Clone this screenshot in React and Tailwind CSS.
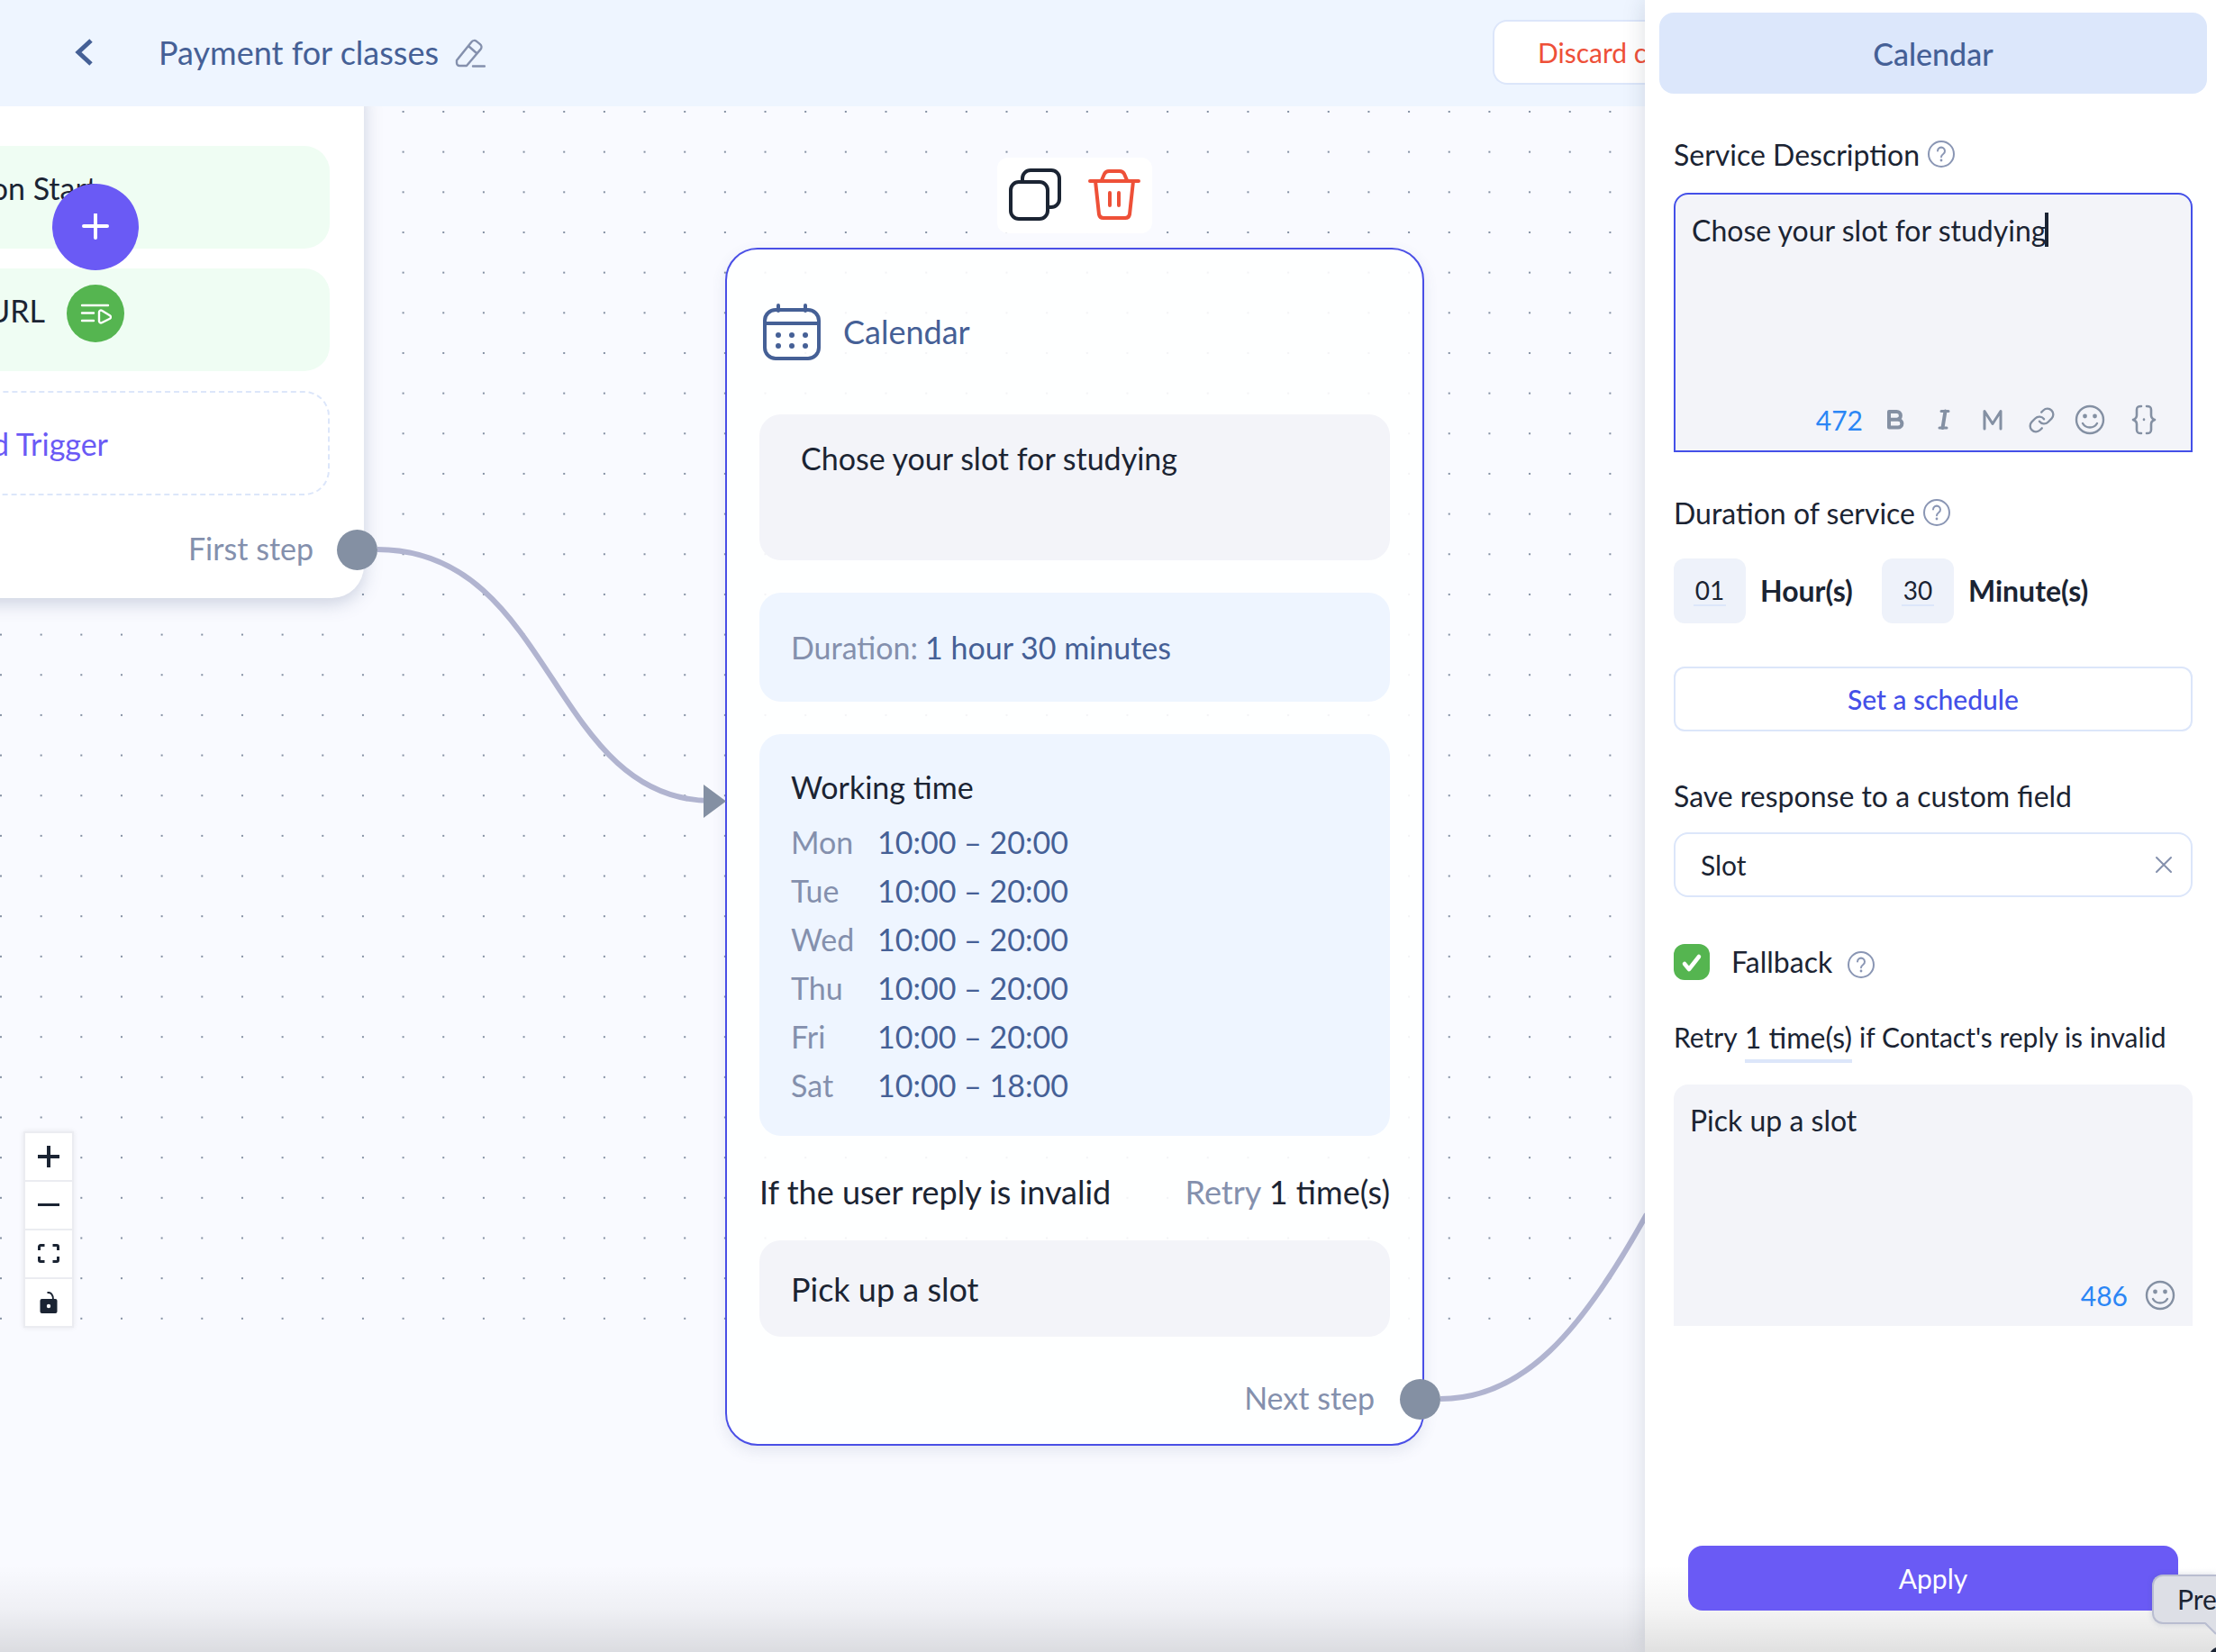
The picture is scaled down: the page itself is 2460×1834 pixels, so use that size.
import React, { useState } from 'react';
import { Link } from 'lucide-react';

const week = [
    { day: 'Mon', hours: '10:00 – 20:00' },
    { day: 'Tue', hours: '10:00 – 20:00' },
    { day: 'Wed', hours: '10:00 – 20:00' },
    { day: 'Thu', hours: '10:00 – 20:00' },
    { day: 'Fri', hours: '10:00 – 20:00' },
    { day: 'Sat', hours: '10:00 – 18:00' }
];

const HelpIcon = () => (
    <svg className="size-8 shrink-0" viewBox="0 0 32 32" fill="none" stroke="#8a96b4" strokeWidth="2" strokeLinecap="round">
        <circle cx="16" cy="15" r="14" />
        <path d="M12 11.600a4 4 0 1 1 6.200 3.400c-1.500 1-2.200 1.600-2.200 3.200" />
        <circle cx="16" cy="22" r="1.400" fill="#8a96b4" stroke="none" />
    </svg>
);

const SmileIcon = () => (
    <svg className="size-9" viewBox="0 0 36 36" fill="none" stroke="#8490a3" strokeWidth="2.400" strokeLinecap="round">
        <circle cx="18" cy="18" r="15" />
        <circle cx="12.500" cy="14" r="2.400" fill="#8490a3" stroke="none" />
        <circle cx="23.500" cy="14" r="2.400" fill="#8490a3" stroke="none" />
        <path d="M10 22c3.500 6 12.500 6 16 0" />
    </svg>
);

const CalendarIcon = () => (
    <svg className="h-16 w-[66px]" viewBox="0 0 66 64" fill="none" stroke="#456096" strokeWidth="4" strokeLinecap="round">
        <rect x="3" y="8" width="60" height="54" rx="12" />
        <path d="M4 23h58M18 3v6M48 3v6" />
        <g fill="#456096" stroke="none">
            <circle cx="18" cy="36" r="3" /><circle cx="33" cy="36" r="3" /><circle cx="48" cy="36" r="3" />
            <circle cx="18" cy="48" r="3" /><circle cx="33" cy="48" r="3" /><circle cx="48" cy="48" r="3" />
        </g>
    </svg>
);

const Header = () => (
    <header className="flex h-[118px] items-center overflow-hidden bg-[#eef5ff] pb-0.5 pl-20">
        <button aria-label="Back">
            <svg className="h-8 w-6" viewBox="0 0 24 32" fill="none" stroke="#456096" strokeWidth="5">
                <path d="M21 3 7 16l14 13" />
            </svg>
        </button>
        <h1 className="ml-[72px] text-[36px] text-[#456096]">Payment for classes</h1>
        <button aria-label="Rename" className="ml-4">
            <svg className="size-9" viewBox="0 0 36 36" fill="none" stroke="#8490ad" strokeWidth="2.400" strokeLinecap="round" strokeLinejoin="round">
                <path d="M4 27 20.500 6.500a4 4 0 0 1 5.500-.6l4 3.200a4 4 0 0 1 .6 5.500L15 33H7a3 3 0 0 1-3-3zM17 11l9 8M22 33.500h13" />
            </svg>
        </button>
        <button className="ml-auto h-[72px] w-[169px] overflow-hidden rounded-l-2xl border-2 border-r-0 border-[#dce6fa] bg-white pl-12 text-left text-[30px] whitespace-nowrap text-[#ee5038]">
            Discard changes
        </button>
    </header>
);

const StartNode = () => (
    <section className="absolute -top-10 right-full -mr-[404px] w-[776px] rounded-[36px] bg-white px-[38px] pt-[84px] pb-7 text-[34px] shadow-[0_6px_20px_rgba(70,90,130,0.25)]">
        <div className="flex flex-col gap-[22px]">
            <div className="flex h-[114px] items-center justify-end rounded-[28px] bg-[#effdf3] pr-[258px] pb-[22px]">Conversation Start</div>
            <div className="flex h-[114px] items-center justify-end rounded-[28px] bg-[#effdf3] pr-[316px] pb-[22px]">URL</div>
            <button className="flex h-[116px] items-center justify-end rounded-[28px] border-2 border-dashed border-[#dce6fa] pr-[244px] text-[#6a5af5]">Add Trigger</button>
        </div>
        <p className="mt-8 pr-[18px] text-right leading-[54px] text-[#8490ad]">First step</p>
        <span className="absolute -right-[15px] bottom-[31px] size-[45px] rounded-full bg-[#8490a3]"></span>
    </section>
);

const CalendarNode = () => (
    <section className="absolute top-[157px] left-[805px] w-[776px] rounded-[36px] border-2 border-[#4a4fe6] bg-white/90 px-9 pt-[59px] pb-5 text-[34px] shadow-[0_6px_16px_rgba(70,90,130,0.12)]">
        <div className="absolute bottom-full left-[300px] mb-[18px] flex h-[84px] w-[172px] items-center justify-between rounded-xl bg-white px-3">
            <button aria-label="Duplicate">
                <svg className="size-[60px]" viewBox="0 0 60 60" fill="none" stroke="#1b2433" strokeWidth="4">
                    <rect x="3" y="15" width="41" height="41" rx="9" />
                    <path d="M16 15v-4a9 9 0 0 1 9-9h23a9 9 0 0 1 9 9v23a9 9 0 0 1-9 9h-4" />
                </svg>
            </button>
            <button aria-label="Delete">
                <svg className="size-[60px]" viewBox="0 0 60 60" fill="none" stroke="#ee5038" strokeWidth="4" strokeLinecap="round" strokeLinejoin="round">
                    <path d="M3 14h54M9 14l4 37a5 5 0 0 0 5 4h24a5 5 0 0 0 5-4l4-37M16 13l3-7a6 6 0 0 1 5-3h12a6 6 0 0 1 5 3l3 7M25 27v14M35 27v14" />
                </svg>
            </button>
        </div>

        <div className="flex items-center gap-6 pl-[3px] text-[#456096]">
            <CalendarIcon />
            <h2 className="text-[36px]">Calendar</h2>
        </div>
        <p className="mt-[60px] h-[162px] rounded-3xl bg-[#f3f4f9] px-[46px] pt-[23px]">Chose your slot for studying</p>
        <p className="mt-9 flex h-[121px] items-center gap-2 rounded-3xl bg-[#eef5ff] px-[35px] text-[#456096]">
            <span className="text-[#8490ad]">Duration:</span>1 hour 30 minutes
        </p>
        <div className="mt-9 h-[446px] rounded-3xl bg-[#eef5ff] px-[35px] pt-8">
            <h3 className="leading-[54px]">Working time</h3>
            <table className="mt-[7px] text-left leading-[54px] text-[#456096]">
                <tbody>
                    {week.map(row => (
                        <tr key={row.day}>
                            <th className="w-24 font-normal text-[#8490ad]">{row.day}</th>
                            <td>{row.hours}</td>
                        </tr>
                    ))}
                </tbody>
            </table>
        </div>
        <div className="mt-[35px] flex h-[54px] items-center justify-between text-[36px]">
            <p>If the user reply is invalid</p>
            <p><span className="text-[#8490ad]">Retry</span> 1 time(s)</p>
        </div>
        <p className="mt-[27px] flex h-[107px] items-center rounded-3xl bg-[#f3f4f9] px-[35px] text-[36px]">Pick up a slot</p>
        <p className="mt-[41px] mb-1 pr-[17px] text-right leading-[54px] text-[#8490ad]">Next step</p>
        <span className="absolute -right-5 bottom-[27px] size-[45px] rounded-full bg-[#8490a3]"></span>
    </section>
);

const Controls = () => (
    <div className="absolute top-[1138px] left-[26px] flex flex-col gap-0.5 border-2 border-[#ebecf1] bg-[#ebecf1] shadow-[0_0_6px_rgba(0,0,0,0.08)]">
        <button aria-label="Zoom in" className="grid size-[52px] place-items-center bg-white">
            <svg className="size-6" viewBox="0 0 24 24" stroke="#1b2433" strokeWidth="4"><path d="M0 12h24M12 0v24" /></svg>
        </button>
        <button aria-label="Zoom out" className="grid size-[52px] place-items-center bg-white">
            <svg className="size-6" viewBox="0 0 24 24" stroke="#1b2433" strokeWidth="3"><path d="M0 11.500h24" /></svg>
        </button>
        <button aria-label="Fit view" className="grid size-[52px] place-items-center bg-white">
            <svg className="size-6" viewBox="0 0 24 24" fill="none" stroke="#1b2433" strokeWidth="3">
                <path d="M1.500 8V4A1.500 1.500 0 0 1 3 2.500h4.500M16.500 2.500H21A1.500 1.500 0 0 1 22.500 4v4M22.500 15v4a1.500 1.500 0 0 1-1.500 1.500h-4.500M7.500 20.500H3A1.500 1.500 0 0 1 1.500 19v-4" />
            </svg>
        </button>
        <button aria-label="Lock" className="grid size-[52px] place-items-center bg-white">
            <svg className="size-6" viewBox="0 0 24 24">
                <path d="M10.500 1C14.500.6 17 3 17 9" fill="none" stroke="#1b2433" strokeWidth="2" />
                <rect x="2.500" y="8" width="19" height="16" rx="2" fill="#1b2433" />
                <circle cx="12" cy="16" r="2.200" fill="#fff" />
            </svg>
        </button>
    </div>
);

const Canvas = () => (
    <main className="relative flex-1 overflow-hidden bg-[#f9faff]">
        <svg className="absolute inset-0 h-[1350px] w-full">
            <defs>
                <pattern id="dots" width="44.660" height="44.660" patternUnits="userSpaceOnUse" y="5">
                    <rect x="0" y="0" width="2" height="2" fill="#8490a3" />
                </pattern>
            </defs>
            <rect width="100%" height="100%" fill="url(#dots)" />
        </svg>
        <StartNode />
        <CalendarNode />
        <svg className="pointer-events-none absolute inset-0 size-full" fill="none" stroke="#b1b4d0" strokeWidth="6">
            <path d="M419 492C615 492 610 771 790 771" />
            <path d="M1599 1435C1690 1435 1755 1362 1828 1230" />
            <path d="M781 753v37l25-18.500z" fill="#8490a3" stroke="none" />
        </svg>
        <button aria-label="Add block" className="absolute top-[86px] left-[58px] grid size-24 place-items-center rounded-full bg-[#6a5af5]">
            <svg className="size-[30px]" viewBox="0 0 30 30" stroke="#fff" strokeWidth="4" strokeLinecap="round"><path d="M2 14h26M15 1v26" /></svg>
        </button>
        <button aria-label="Run flow" className="absolute top-[198px] left-[74px] grid size-16 place-items-center rounded-full bg-[#55b550]">
            <svg className="h-6 w-9" viewBox="0 0 36 24" fill="none" stroke="#fff" strokeWidth="2.400" strokeLinecap="round" strokeLinejoin="round">
                <path d="M3 3h29M3 11.500h13M3 20h13M22 10.500v10a2 2 0 0 0 3 1.700l9-4.500a2 2 0 0 0 0-3.400l-9-5.500a2 2 0 0 0-3 1.700z" />
            </svg>
        </button>
        <Controls />
    </main>
);

const SettingsPanel = () => {
    const [description, setDescription] = useState('Chose your slot for studying');
    const [fallback, setFallback] = useState(true);
    const [retryText, setRetryText] = useState('Pick up a slot');

    return (
        <aside className="relative w-[634px] shrink-0 bg-white pt-[14px] text-[32px] shadow-[0_0_24px_rgba(30,40,70,0.15)]">
            <h2 className="mr-[10px] ml-4 flex h-[90px] items-center justify-center rounded-2xl bg-[#dce7fb] text-[34px] font-medium text-[#456096]">Calendar</h2>
            <form className="flex flex-col pr-[26px] pl-8" onSubmit={e => e.preventDefault()}>
                <div className="mt-11 flex h-12 items-center gap-2">
                    <label htmlFor="description">Service Description</label><HelpIcon />
                </div>
                <div className="relative mt-[18px] flex h-72 flex-col rounded-t-2xl border-2 border-[#4450e8] bg-[#f3f4f9]">
                    <textarea id="description" className="flex-1 resize-none px-[18px] pt-4 leading-[48px] outline-none" value={description} onChange={e => setDescription(e.target.value)} />
                    <span className="absolute top-5 left-[410px] h-[38px] w-1 bg-[#1b2433]"></span>
                    <div className="flex h-[68px] items-center justify-end gap-[18px] pr-[34px] text-[#8490a3]">
                        <span className="text-[30px] text-[#2b86f5]">472</span>
                        <button type="button" aria-label="Bold">
                            <svg className="size-9" viewBox="0 0 36 36" fill="none" stroke="currentColor" strokeWidth="4" strokeLinejoin="round">
                                <path d="M11 9h8.500a4.300 4.300 0 0 1 0 8.800H11zM11 17.800h10a4.300 4.300 0 0 1 0 8.800H11z" />
                            </svg>
                        </button>
                        <button type="button" aria-label="Italic">
                            <svg className="size-9" viewBox="0 0 36 36" fill="none" stroke="currentColor" strokeWidth="3" strokeLinecap="round">
                                <path d="M15 8.500h8M13 27h8" />
                                <path d="m19.500 8.500-3 18.500" strokeWidth="4" />
                            </svg>
                        </button>
                        <button type="button" aria-label="Monospace">
                            <svg className="size-9" viewBox="0 0 36 36" fill="none" stroke="currentColor" strokeWidth="3" strokeLinecap="round" strokeLinejoin="round">
                                <path d="M9 28V8.500l9 14 9-14V28" />
                            </svg>
                        </button>
                        <button type="button" aria-label="Link" className="grid size-9 place-items-center"><Link size={31} strokeWidth={1.800} /></button>
                        <button type="button" aria-label="Emoji"><SmileIcon /></button>
                        <button type="button" aria-label="Variables" className="ml-1.5">
                            <svg className="size-9" viewBox="0 0 36 36" fill="none" stroke="currentColor" strokeWidth="2.600" strokeLinecap="round" strokeLinejoin="round">
                                <path d="M15 3c-4 0-5 1-5 4v6c0 3-1 4-4 5 3 1 4 2 4 5v6c0 3 1 4 5 4M21 3c4 0 5 1 5 4v6c0 3 1 4 4 5-3 1-4 2-4 5v6c0 3-1 4-5 4M18 17.500v.5" />
                            </svg>
                        </button>
                    </div>
                </div>

                <div className="mt-11 flex h-12 items-center gap-2">
                    <span>Duration of service</span><HelpIcon />
                </div>
                <div className="mt-[26px] flex h-[72px] items-center">
                    <span className="grid h-full w-20 place-items-center rounded-xl bg-[#eef2fa]">
                        <input id="hours" className="w-9 border-b-2 border-[#dce6fa] text-center text-[28px] leading-8 outline-none" defaultValue="01" />
                    </span>
                    <label htmlFor="hours" className="ml-4 font-bold">Hour(s)</label>
                    <span className="ml-8 grid h-full w-20 place-items-center rounded-xl bg-[#eef2fa]">
                        <input id="minutes" className="w-9 border-b-2 border-[#dce6fa] text-center text-[28px] leading-8 outline-none" defaultValue="30" />
                    </span>
                    <label htmlFor="minutes" className="ml-4 font-bold">Minute(s)</label>
                </div>
                <button type="button" className="mt-12 h-[72px] rounded-xl border-2 border-[#dce6fa] text-[30px] font-medium text-[#4450e8]">Set a schedule</button>

                <label htmlFor="field" className="mt-12 leading-[48px]">Save response to a custom field</label>
                <div className="mt-4 flex h-[72px] items-center rounded-2xl border-2 border-[#dce6fa] pr-5 pl-7">
                    <input id="field" className="min-w-0 flex-1 text-[30px] outline-none" defaultValue="Slot" />
                    <button type="button" aria-label="Clear">
                        <svg className="size-5" viewBox="0 0 20 20" stroke="#8490ad" strokeWidth="2" strokeLinecap="round"><path d="m2 2 16 16M18 2 2 18" /></svg>
                    </button>
                </div>

                <div className="mt-12 flex h-12 items-center">
                    <span className="relative size-10">
                        <input id="fallback" type="checkbox" className="size-10 appearance-none rounded-xl bg-[#d5dae4] checked:bg-[#55b550]" checked={fallback} onChange={e => setFallback(e.target.checked)} />
                        <svg className="pointer-events-none absolute inset-0 size-10" viewBox="0 0 40 40" fill="none" stroke="#fff" strokeWidth="4.500" strokeLinecap="round" strokeLinejoin="round"><path d="m12 22 5 6 11-14" /></svg>
                    </span>
                    <label htmlFor="fallback" className="mr-4 ml-6">Fallback</label>
                    <span className="pt-2"><HelpIcon /></span>
                </div>
                <p className="mt-9 flex items-start gap-2 text-[30px] leading-[46px] whitespace-nowrap">
                    Retry <button type="button" className="border-b-4 border-[#dce6fa] text-[32px] leading-[48px]">1 time(s)</button> if Contact's reply is invalid
                </p>
                <div className="mt-6 flex h-[268px] flex-col rounded-t-2xl bg-[#f3f4f9]">
                    <textarea aria-label="Retry message" className="flex-1 resize-none px-[18px] pt-4 leading-[48px] outline-none" value={retryText} onChange={e => setRetryText(e.target.value)} />
                    <div className="flex h-[68px] items-center justify-end gap-[18px] pr-[18px]">
                        <span className="text-[30px] text-[#2b86f5]">486</span>
                        <button type="button" aria-label="Emoji"><SmileIcon /></button>
                    </div>
                </div>
            </form>
        </aside>
    );
};

const App = () => (
    <div className="relative flex min-h-screen overflow-hidden font-['Lato',sans-serif] text-[#1b2433]">
        <div className="flex min-w-0 flex-1 flex-col">
            <Header />
            <Canvas />
        </div>
        <SettingsPanel />
        <div className="pointer-events-none absolute inset-x-0 bottom-0 h-24 bg-linear-to-b from-transparent via-black/4 to-black/12"></div>
        <button className="absolute right-[42px] bottom-[46px] h-[72px] w-[544px] rounded-2xl bg-[#6a5af5] text-[30px] text-white">Apply</button>
        {/* tooltip of the preview bubble that sits past the corner */}
        <div className="absolute right-0 bottom-[31px] h-[55px] w-[71px] overflow-hidden rounded-l-xl border-2 border-r-0 border-[#b9bdd0] bg-[#dddfe6] pl-[26px] text-[30px] leading-[51px] shadow-[0_0_6px_rgba(70,90,130,0.2)]">Preview</div>
        <svg className="absolute right-0 bottom-0 h-[33px] w-3" viewBox="0 0 12 33">
            <path d="M0 0h12v12z" fill="#dddfe6" />
            <path d="m0 1 12 12" stroke="#b9bdd0" strokeWidth="2" />
            <path d="M12 28v5H6c1-2 3-4 6-5z" fill="#1b2433" />
        </svg>
    </div>
);

export default App;
